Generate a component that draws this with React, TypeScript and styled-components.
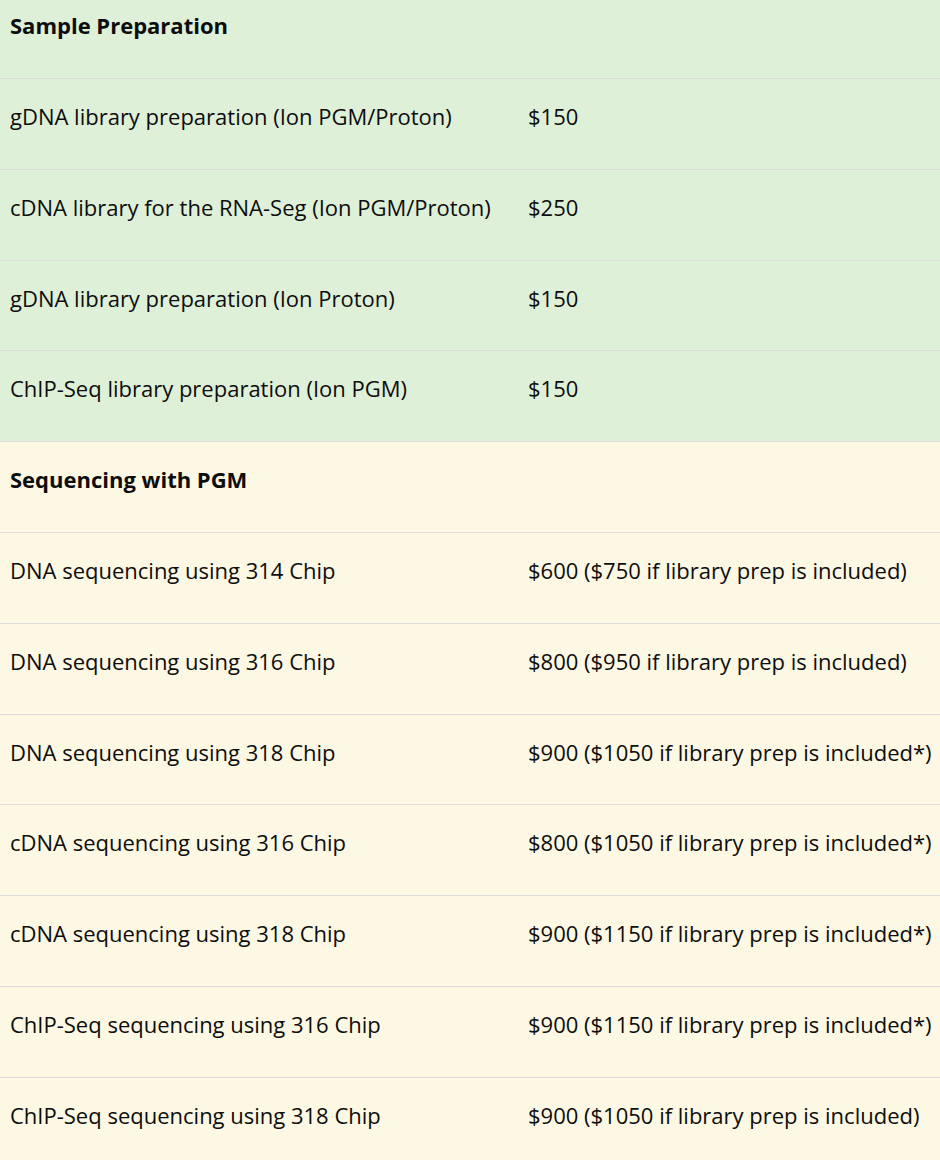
import React from "react";
import styled, { createGlobalStyle } from "styled-components";

const GlobalStyle = createGlobalStyle`
  html, body {
    margin: 0;
    padding: 0;
    overflow: hidden;
  }
  body {
    font-family: "Open Sans", "Noto Sans", sans-serif;
    color: #0d0d0d;
  }
`;

const PriceTable = styled.div`
  display: flex;
  flex-direction: column;
  width: 940px;
`;

const Row = styled.div<{ $tone: "success" | "warning" }>`
  display: grid;
  grid-template-columns: 518px 1fr;
  box-sizing: border-box;
  height: 90.8px;
  border-top: 1px solid #ddd;
  background: ${(p) => (p.$tone === "success" ? "#dff0d8" : "#fcf8e3")};
  font-size: 22px;
  line-height: 31.4px;

  &:first-child {
    height: 78px;
    border-top: none;
  }
`;

const Cell = styled.div`
  padding: 22px 10px 0;
  white-space: nowrap;

  ${Row}:first-child & {
    padding-top: 10px;
  }
`;

const HeadCell = styled(Cell)`
  grid-column: 1 / -1;
  font-weight: 700;
`;

type Item = { name: string; price: string };
type Section = { title: string; tone: "success" | "warning"; items: Item[] };

const sections: Section[] = [
  {
    title: "Sample Preparation",
    tone: "success",
    items: [
      { name: "gDNA library preparation (Ion PGM/Proton)", price: "$150" },
      { name: "cDNA library for the RNA-Seg (Ion PGM/Proton)", price: "$250" },
      { name: "gDNA library preparation (Ion Proton)", price: "$150" },
      { name: "ChIP-Seq library preparation (Ion PGM)", price: "$150" },
    ],
  },
  {
    title: "Sequencing with PGM",
    tone: "warning",
    items: [
      { name: "DNA sequencing using 314 Chip", price: "$600 ($750 if library prep is included)" },
      { name: "DNA sequencing using 316 Chip", price: "$800 ($950 if library prep is included)" },
      { name: "DNA sequencing using 318 Chip", price: "$900 ($1050 if library prep is included*)" },
      { name: "cDNA sequencing using 316 Chip", price: "$800 ($1050 if library prep is included*)" },
      { name: "cDNA sequencing using 318 Chip", price: "$900 ($1150 if library prep is included*)" },
      { name: "ChIP-Seq sequencing using 316 Chip", price: "$900 ($1150 if library prep is included*)" },
      { name: "ChIP-Seq sequencing using 318 Chip", price: "$900 ($1050 if library prep is included)" },
    ],
  },
];

export default function App() {
  return (
    <>
      <GlobalStyle />
      <PriceTable>
        {sections.map((s) => (
          <React.Fragment key={s.title}>
            <Row $tone={s.tone}>
              <HeadCell>{s.title}</HeadCell>
            </Row>
            {s.items.map((it) => (
              <Row $tone={s.tone} key={it.name}>
                <Cell>{it.name}</Cell>
                <Cell>{it.price}</Cell>
              </Row>
            ))}
          </React.Fragment>
        ))}
      </PriceTable>
    </>
  );
}
